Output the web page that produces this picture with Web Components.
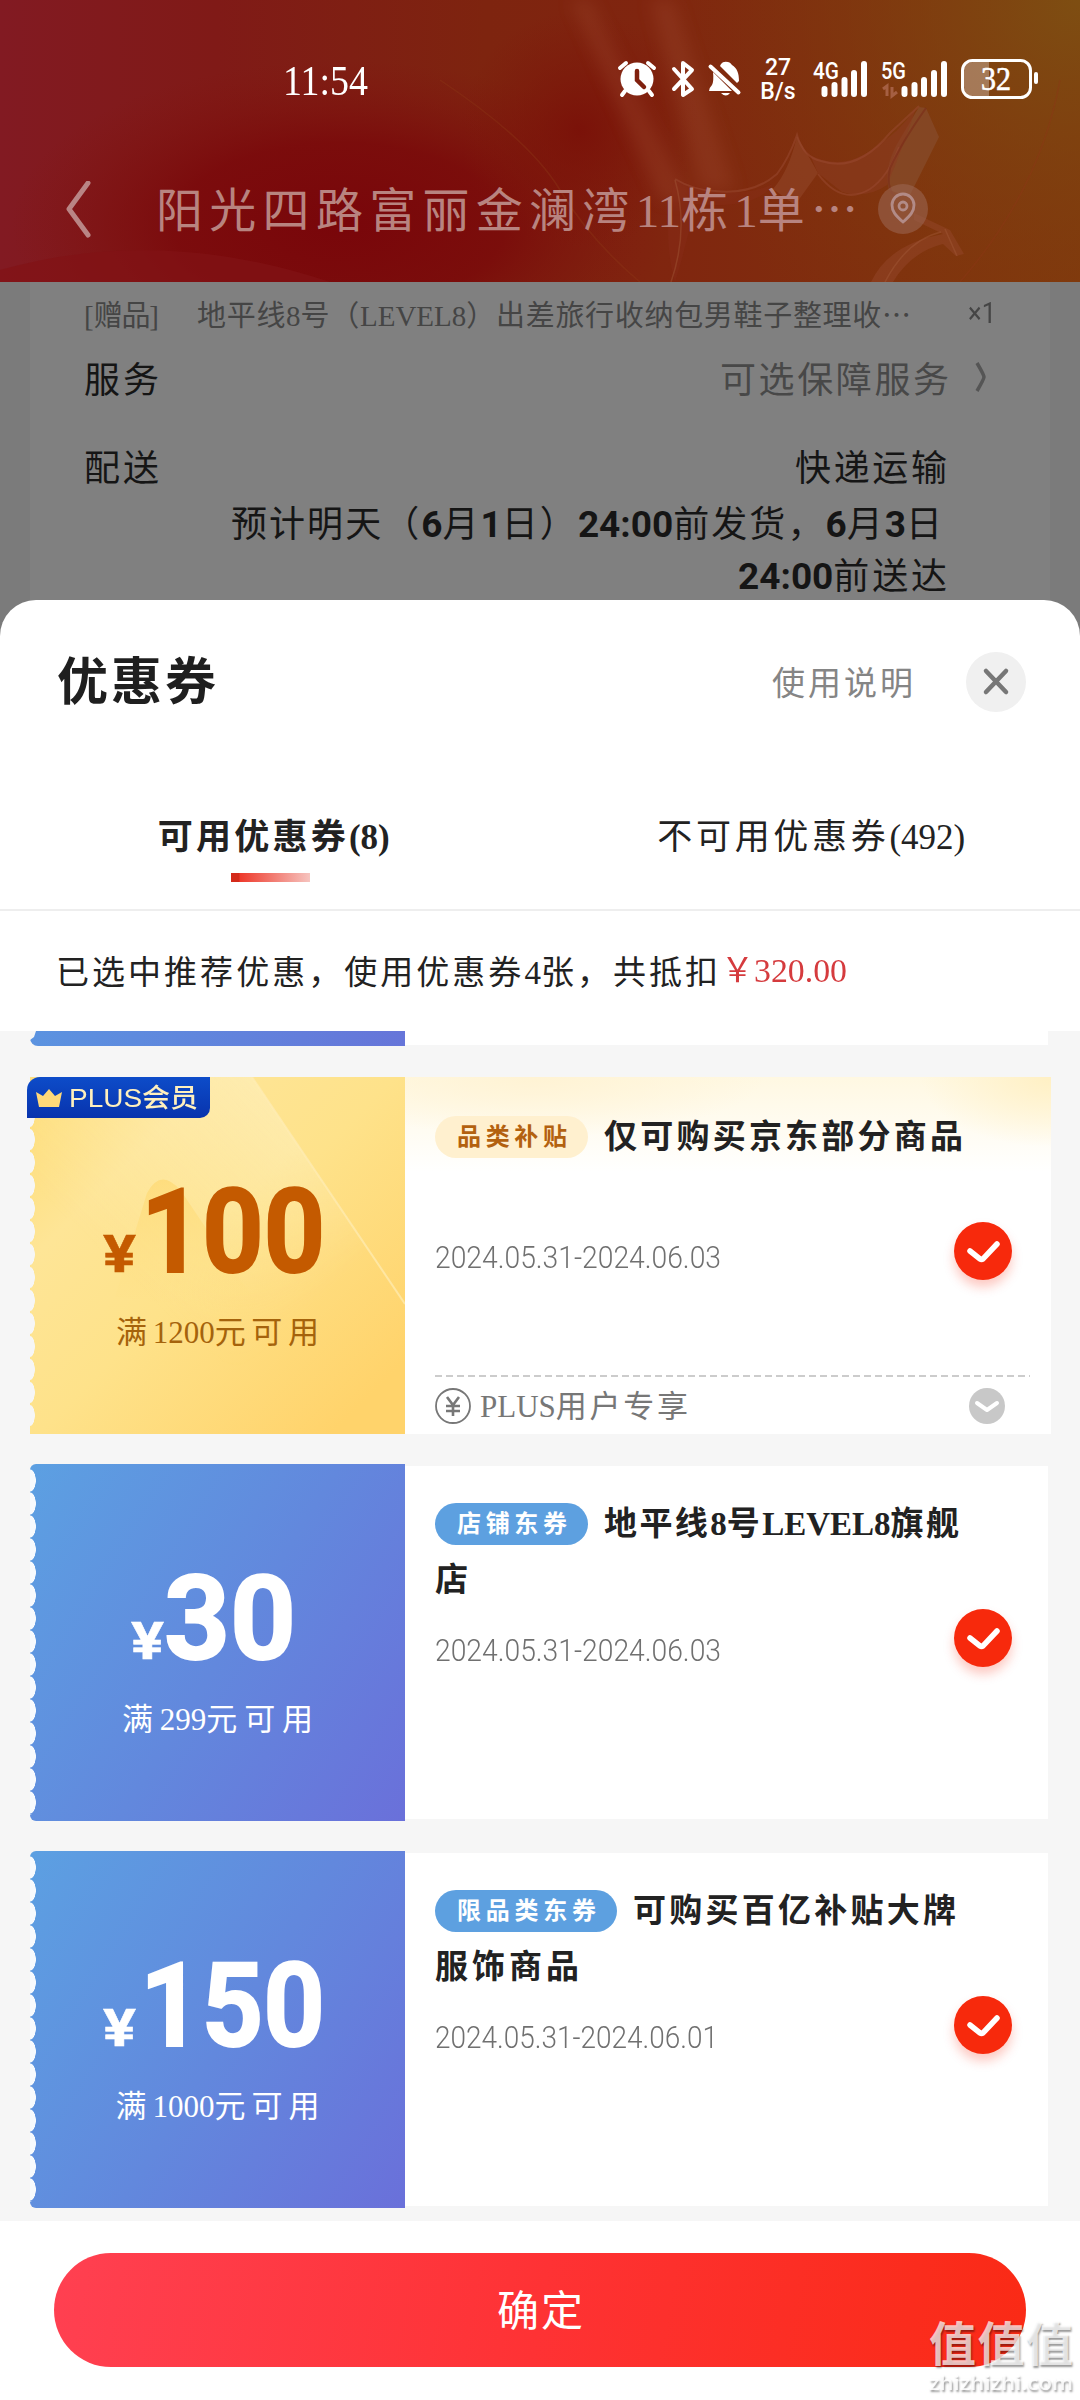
<!DOCTYPE html>
<html lang="zh-CN">
<head>
<meta charset="utf-8">
<title>优惠券</title>
<style>
body{margin:0;width:1080px;height:2400px;overflow:hidden;background:#fff;font-family:"Liberation Serif","Noto Sans CJK SC",serif;color:#222}
</style>
</head>
<body>
<coupon-page></coupon-page>
<script>
const define = (name, html, after) => customElements.define(name, class extends HTMLElement {
  connectedCallback() {
    if (this.shadowRoot) return;
    const root = this.attachShadow({mode: 'open'});
    root.innerHTML = typeof html === 'function' ? html(this) : html;
    if (after) after(this, root);
  }
});

/* Text fitted to a given width: spacing goes after the Chinese characters only,
   runs of Latin letters and digits stay tight. "scale" stretches the text instead. */
define('fit-text', `
<style>
:host{display:inline-block;white-space:nowrap;flex:none}
span{display:inline-block;transform-origin:0 50%}
</style><span><slot></slot></span>`, (el, root) => {
  const w = +el.getAttribute('w'), s = root.querySelector('span');
  const natural = s.getBoundingClientRect().width;
  el.style.width = w + 'px';
  if (el.hasAttribute('scale')) { s.style.transform = `scaleX(${w / natural})`; return; }
  const latin = /[\x21-\x7e]+/g;
  const text = el.textContent.trim();
  const wide = [...text.replace(latin, '')].length - (/[\x21-\x7e]$/.test(text) ? 0 : 1);
  for (const node of [...el.childNodes]) {
    if (node.nodeType !== 3) { if (/^[\x21-\x7e]+$/.test(node.textContent)) node.style.letterSpacing = '0'; continue; }
    const t = document.createElement('template');
    t.innerHTML = node.textContent.replace(latin, m => `<span style="letter-spacing:0">${m}</span>`);
    node.replaceWith(t.content);
  }
  if (wide > 0) s.style.letterSpacing = (w - natural) / wide + 'px';
});

define('status-bar', `
<style>
:host{display:flex;height:40px;padding:59px 42px 0 283px;color:#fff;align-items:center}
.time{font-size:43px;line-height:44px;padding-top:3px;margin-right:auto}
.icons{display:flex;align-items:center;height:40px}
svg{display:block;flex:none;fill:#fff;overflow:visible}
.rate{font:500 23px/24px Roboto,sans-serif;width:36px;margin:2px 17px 0 18px;display:flex;flex-direction:column;align-items:center}
text{font-family:Roboto,sans-serif;font-weight:500}
</style>
<fit-text class="time" w="85" scale>11:54</fit-text>
<div class="icons">
<svg width="38" height="40" viewBox="0 0 38 40"><circle cx="19" cy="20" r="16.5"/><path d="M2 9 8 4M36 9l-6-5M7 32l-3 4M31 32l3 4" stroke="#fff" stroke-width="4" stroke-linecap="round"/><path d="M19 12v9l7 7" fill="none" stroke="#80200e" stroke-width="4.500" stroke-linecap="round"/></svg>
<svg width="24" height="40" viewBox="0 0 24 40" style="margin-left:15px"><path d="M3 10l18 20-9 6V4l9 7L3 30" fill="none" stroke="#fff" stroke-width="4" stroke-linejoin="round" stroke-linecap="round"/></svg>
<svg width="34" height="40" viewBox="0 0 34 40" style="margin-left:13px"><path d="M13 5q2-3 7-2 2 0 4 3c5 3 7 8 7 16l-2 2L12 7zM5 13l19 19H1q0-3 3-6 2-4 1-13zM13 34h9q-4 5-9 0z"/><path d="M2.500 7.500l28 26" stroke="#fff" stroke-width="4" stroke-linecap="round"/></svg>
<div class="rate"><span>27</span><span>B/s</span></div>
<svg width="56" height="40" viewBox="0 0 56 40"><text x="0" y="20" font-size="23" textLength="26" lengthAdjust="spacingAndGlyphs">4G</text><path d="M11.500 30v5M21.500 26v9M31.500 21v14M41 14v21M51 5v30" stroke="#fff" stroke-width="6" stroke-linecap="round"/></svg>
<svg width="68" height="40" viewBox="0 0 68 40" style="margin-left:12px"><text x="0" y="20" font-size="23" textLength="25" lengthAdjust="spacingAndGlyphs">5G</text><path d="M2 30l4-3v10M11 28v9l5-4" fill="none" stroke="#a55f42" stroke-width="3"/><path d="M23.500 30v5M33.500 26v9M43 21v14M53 14v21M63 5v30" stroke="#fff" stroke-width="6" stroke-linecap="round"/></svg>
<svg width="78" height="40" viewBox="0 0 78 40" style="margin-left:11px"><path d="M13 3h16v34H13Q4 37 4 27V13Q4 3 13 3z" opacity=".3"/><rect x="2.500" y="1.500" width="68" height="37" rx="10" fill="none" stroke="#fff" stroke-width="3"/><rect x="74" y="13" width="4" height="12" rx="2"/><text x="21" y="31" font-size="34" textLength="30" lengthAdjust="spacingAndGlyphs" style="font-family:'Liberation Serif',serif" stroke="#fff" stroke-width=".6">32</text></svg>
</div>`);

define('order-header', `
<style>
:host{display:grid;height:282px;overflow:hidden;background:#80200e}
:host>*{grid-area:1/1}
.bg{display:block}
.title{display:flex;align-items:center;height:80px;padding:71px 0 0 65px;color:#b98585}
.title fit-text{font-size:47px;line-height:76px;margin:-3px 0 0 64px;color:#b88480}
.cjk{font-family:"Noto Sans CJK SC",sans-serif}
.pin{margin-left:20px}
</style>
<svg class="bg" width="1080" height="282" viewBox="0 0 1080 282">
<defs>
<linearGradient id="a"><stop offset="0" stop-color="#821a22"/><stop offset=".2" stop-color="#801a17"/><stop offset=".45" stop-color="#7e240f"/><stop offset=".6" stop-color="#80250f"/><stop offset="1" stop-color="#80390d"/></linearGradient>
<radialGradient id="b" gradientUnits="userSpaceOnUse" cx="0" cy="0" r="1" gradientTransform="translate(340 225) scale(330 165)"><stop offset="0" stop-color="#79060a"/><stop offset=".5" stop-color="#7a080a" stop-opacity=".8"/><stop offset="1" stop-color="#80140f" stop-opacity="0"/></radialGradient>
<radialGradient id="c" gradientUnits="userSpaceOnUse" cx="1080" cy="0" r="420"><stop offset="0" stop-color="#7e4e12"/><stop offset="1" stop-color="#80330c" stop-opacity="0"/></radialGradient>
<radialGradient id="e" gradientUnits="userSpaceOnUse" cx="580" cy="130" r="120"><stop offset="0" stop-color="#7a1008" stop-opacity=".9"/><stop offset="1" stop-color="#7c160a" stop-opacity="0"/></radialGradient>
<filter id="f" x="-50%" y="-20%" width="200%" height="140%"><feGaussianBlur stdDeviation="8"/></filter>
</defs>
<rect width="1080" height="282" fill="url(#a)"/>
<rect width="1080" height="282" fill="url(#b)"/>
<rect width="1080" height="282" fill="url(#e)"/><rect width="1080" height="282" fill="url(#c)"/>
<path d="M0 270Q160 225 330 282H0z" fill="#821216" opacity=".7"/>
<path d="M570 0h20L690 200H660zM650 0h24L735 190h-35z" fill="#a04c30" opacity=".3" filter="url(#f)"/>
<path d="M440 80Q530 140 560 190T640 282M1060 80Q1040 190 960 282" fill="none" stroke="#8c3817" stroke-width="1.500" opacity=".4"/>
<path d="M919 107l7 1 13 29-30 60-20-7q-6-20 8-46z" fill="#854826" opacity=".9"/>
<path d="M797 136l21 37-23 32-22-16q16-18 24-53z" fill="#8e4124" opacity=".7"/>
<path d="M810 155q34 18 68-10 20-12 38-37-14 42-29 77-20 14-45 7l-24-19z" fill="#8b3a20" opacity=".6"/>
<path d="M675 179l18 7q44 14 80-2-16 26-78 20-8 40-20 78-14-48 0-103z" fill="#8b2f20" opacity=".25"/>
<path d="M675 179q18 11 40 12 38 4 62-17 12-16 20-39 6 22 24 26 36 12 69-28l29-27M818 174q24 32 52 15 18-12 29-42" fill="none" stroke="#9a4a32" stroke-width="2" opacity=".5"/>
<path d="M926 108q-24 34-36 60-4 18 4 28" fill="none" stroke="#7a2b18" stroke-width="2" opacity=".6"/>
<path d="M914 213l36 17 14 24-8 2-13-12q-32 8-50 38h-22q18-38 72-48l-29-14z" fill="#94452a" opacity=".5"/>
<path d="M945 229l12 27M941 232q-34 8-56 50M675 180q14 50-4 102" fill="none" stroke="#a55c3b" stroke-width="1.500" opacity=".4"/>
</svg>
<div>
<status-bar></status-bar>
<div class="title">
<svg width="27" height="58" viewBox="0 0 27 58"><path d="M23 2 4 28l19 26" fill="none" stroke="currentColor" stroke-width="5" stroke-linecap="round" stroke-linejoin="round"/></svg>
<fit-text w="702">阳光四路富丽金澜湾11栋1单<span class="cjk">…</span></fit-text>
<svg class="pin" width="50" height="52" viewBox="0 0 50 52"><circle cx="25" cy="25" r="25" fill="#9a6450" opacity=".6"/><path d="M25 38C17 31 14 27 14 21a11 11 0 0122 0c0 6-3 10-11 17z" fill="none" stroke="#b28b87" stroke-width="2.800"/><circle cx="25" cy="22" r="4" fill="none" stroke="#b28b87" stroke-width="2.800"/></svg>
</div>
</div>`);

define('order-details', `
<style>
:host{display:block;background:#7b7b7b;padding:0 30px}
.card{background:#808080;height:358px;color:#151515;font-size:36px;overflow:hidden}
.row{display:flex;align-items:center;justify-content:space-between;padding:0 103px 0 54px}
.gift{height:61px;padding:0 54px 3px;font-size:29px;color:#454545;justify-content:flex-start}
.gift .name{margin-left:38px}.gift .qty{margin-left:auto;font-family:Roboto,sans-serif}
.serv{height:61px}.serv .v{color:#484848;margin-left:auto}
.serv{padding-right:63px}.serv svg{margin-left:26px}
.ship{height:52px;margin-top:32px}
.l1{height:60px;justify-content:flex-end;padding-right:108px}
.l2{height:44px;justify-content:flex-end;padding-right:103px}
b{font-family:Roboto,sans-serif;font-size:37px}
.cjk{font-family:"Noto Sans CJK SC",sans-serif}
.row{font-family:"Liberation Serif","Noto Sans CJK SC",serif}
</style>
<div class="card">
<div class="row gift"><fit-text w="75">[赠品]</fit-text><fit-text class="name" w="714">地平线8号（LEVEL8）出差旅行收纳包男鞋子整理收<span class="cjk">…</span></fit-text><fit-text class="qty" w="28" scale>×1</fit-text></div>
<div class="row serv"><fit-text w="75">服务</fit-text><fit-text class="v" w="229">可选保障服务</fit-text><svg width="12" height="32" viewBox="0 0 12 32"><path d="M2 2q7 12 7 14T2 30" fill="none" stroke="#555" stroke-width="3.500"/></svg></div>
<div class="row ship"><fit-text w="75">配送</fit-text><fit-text w="152">快递运输</fit-text></div>
<div class="row l1"><fit-text w="711">预计明天（<b>6</b>月<b>1</b>日）<b>24:00</b>前发货，<b>6</b>月<b>3</b>日</fit-text></div>
<div class="row l2"><fit-text w="209"><b>24:00</b>前送达</fit-text></div>
</div>`);

define('sheet-header', `
<style>
:host{display:flex;height:164px;align-items:center;padding:0 54px 0 57px}
h1{margin:2px auto 0 0;font-size:51px;line-height:70px;font-weight:700;color:#1f1f1f}
.help{font-size:33px;color:#858585;margin:-3px 53px 0 0}
</style>
<h1><fit-text w="159">优惠券</fit-text></h1>
<fit-text class="help" w="141">使用说明</fit-text>
<svg width="60" height="60" viewBox="0 0 60 60"><circle cx="30" cy="30" r="30" fill="#f0f0f0"/><path d="M20 19l20 21M40 19L20 40" stroke="#777" stroke-width="4.500" stroke-linecap="round"/></svg>`);

define('sheet-tab', `
<style>
:host{display:flex;flex:1;flex-direction:column;align-items:center;height:145px;font-size:35px;color:#222}
.t{margin-top:49px;height:50px;line-height:50px}
:host([active]) .t{font-weight:700}
i{display:none;width:79px;height:9px;margin:10px 7px 0 0;background:linear-gradient(90deg,#d42a1a 0 8px,#ee3a2c 9px,#f6c4bf)}
:host([active]) i{display:block}
</style><div class="t"><slot></slot></div><i></i>`);

define('check-mark', `
<style>:host{display:block;border-radius:50%;width:58px;height:58px;background:#f7290c;box-shadow:0 7px 11px #f7290c40}svg{display:block}</style>
<svg width="58" height="58" viewBox="0 0 58 58"><path d="M16 29l10 8q1.500 1 3 0l14-15" fill="none" stroke="#fff" stroke-width="5.500" stroke-linecap="round"/></svg>`);

define('coupon-card', el => {
  const a = n => el.getAttribute(n), gold = el.hasAttribute('gold');
  return `
<style>
:host{display:flex;position:relative;height:357px;margin-bottom:30px}
.left{width:375px;flex:none;display:flex;flex-direction:column;align-items:center;position:relative;
 background:linear-gradient(122deg,#5ca0e2,#6288dd 52%,#6a70da);color:#fff;border-radius:6px 0 0 6px;overflow:hidden;box-sizing:border-box}
.teeth{position:absolute;left:0;top:5px;width:6px;height:346px;background:radial-gradient(ellipse 6px 11.5px at 0 50%,#f7fafd 92%,#f7fafd00 100%) 0 0/6px 23px}
:host([gold]) .left{background:linear-gradient(135deg,#fedc74,#fee596 25%,#fee28a 50%,#ffd36b 90%);color:#c45a00;border-radius:0}
:host([gold]) .teeth{background-image:radial-gradient(ellipse 5px 11px at 0 50%,#f6f6f6 90%,#f6f6f600)}
.shine{position:absolute;left:0;top:0}
.amt{display:flex;align-items:baseline;font-family:Roboto,sans-serif;font-weight:700;font-size:117px;line-height:120px;height:120px;margin:95px 8px 0 0;position:relative;-webkit-text-stroke:2px currentColor}
.yen{font-size:52px;margin-right:${a('yg')}px;-webkit-text-stroke:.5px currentColor}
.cond{font-size:31px;line-height:40px;margin:21px 0 0 0;position:relative;color:#fff}
:host([gold]) .cond{color:#a5630c}
.right{width:${gold ? 646 : 643}px;background:#fff;margin:${gold ? 0 : '2px 0'};box-sizing:border-box;padding:${gold ? 39 : 37}px 0 0 30px}
:host([gold]) .right{background:radial-gradient(ellipse 130px 70px at 100% 0,#fff0c4,#fff3d000),radial-gradient(ellipse 230px 60px at 130px 0,#fff3d4,#fff3d000),linear-gradient(#fff8e2,#fff 95px)}
.line{display:flex;align-items:center;height:41px}
.tag{height:42px;border-radius:21px;display:flex;align-items:center;justify-content:center;background:#5da0e0;color:#fff;font:700 24px/38px "Noto Sans CJK SC",sans-serif;margin-right:16px}
.tag fit-text{margin:-4px 0 0 1px}
:host([gold]) .tag{background:#fff0cf;color:#b3610f}
.name{font-size:33px;font-weight:700;color:#222;margin-top:-6px}
.second{margin-top:15px;height:41px}
.date{font:300 31px/36px Roboto,sans-serif;color:#707070;margin-top:${gold ? 83 : 33}px;display:block}
check-mark{position:absolute;left:924px;top:145px}
.foot{display:flex;align-items:center;margin-top:99px;width:595px;padding-top:12px;color:#777;font-size:31px;background:repeating-linear-gradient(90deg,#ccc 0 7px,#fff0 7px 11px) 0 0/100% 2px no-repeat;height:38px}
.foot fit-text{margin:2px auto 0 9px;line-height:36px}
.foot .more{margin-right:25px}
.plus{position:absolute;left:-3px;top:0;width:183px;height:41px;border-radius:13px 0 10px 0;background:linear-gradient(#0d4cc9,#0833ad);display:flex;align-items:center;color:#fff0bd;font:500 26px/40px "Liberation Sans","Noto Sans CJK SC",sans-serif}
.plus svg{margin:0 7px 0 9px}
</style>
<div class="left">
${gold ? `<svg class="shine" width="375" height="357" viewBox="0 0 375 357"><defs><linearGradient id="g" x1="0" y1="1" x2="1" y2="0"><stop offset=".35" stop-color="#fff3c4" stop-opacity="0"/><stop offset="1" stop-color="#fff3cf" stop-opacity=".7"/></linearGradient><linearGradient id="k" x1="0" y1="0" x2="1" y2="1"><stop offset=".45" stop-color="#fff" stop-opacity="1"/><stop offset=".7" stop-color="#fff" stop-opacity="0"/></linearGradient><mask id="m"><rect width="375" height="357" fill="url(#k)"/></mask><linearGradient id="h" x1="0" y1="0" x2="0" y2="1"><stop offset="0" stop-color="#ffd86e"/><stop offset="1" stop-color="#ffdf80" stop-opacity="0"/></linearGradient></defs><path d="M0 0h222l153 227v130H0z" fill="url(#g)" mask="url(#m)"/><path d="M222 0l153 227" stroke="#ffedb5" stroke-width="2" opacity=".7"/><path d="M85 220l32-104q14-26 34-2l82 122z" fill="url(#h)" opacity=".65"/></svg>` : ''}
<div class="teeth"></div>
<div class="amt"><fit-text class="yen" w="33" scale>¥</fit-text><fit-text w="${a('aw')}" scale>${a('amount')}</fit-text></div>
<fit-text class="cond" w="${a('cw')}">${a('cond')}</fit-text>
</div>
<div class="right">
<div class="line"><div class="tag" style="width:${a('tagw')}px"><fit-text w="${a('tw')}">${a('tag')}</fit-text></div><fit-text class="name" w="${a('nw')}">${a('name')}</fit-text></div>
${a('second') ? `<div class="line second"><fit-text class="name" w="${a('sw')}">${a('second')}</fit-text></div>` : ''}
<fit-text class="date" scale w="${a('dw')}">${a('date')}</fit-text>
${gold ? `<div class="foot"><svg width="36" height="36" viewBox="0 0 36 36" fill="none" stroke="#777"><circle cx="18" cy="18" r="17" stroke-width="1.800"/><path d="M12 9l6 8 6-8M11 18h14M11 23h14M18 17v11" stroke-width="2.600"/></svg><fit-text w="208">PLUS用户专享</fit-text><svg class="more" width="36" height="36" viewBox="0 0 36 36"><circle cx="18" cy="18" r="18" fill="#c8c8c8"/><path d="M8 15l10 7 10-7" fill="none" stroke="#fff" stroke-width="4" stroke-linecap="round" stroke-linejoin="round"/></svg></div>` : ''}
</div>
${gold ? `<div class="plus"><svg width="26" height="18" viewBox="0 0 26 18"><path d="M0 3l7 4 6-7 6 7 7-4-3 15H3z" fill="#ffd979"/></svg><fit-text w="129" scale>PLUS会员</fit-text></div>` : ''}
<check-mark></check-mark>`;
});

define('coupon-sheet', `
<style>
:host{display:block;position:relative;margin-top:-40px;background:#fff;border-radius:36px 36px 0 0;height:1800px;overflow:hidden}
.tabs{display:flex;border-bottom:2px solid #eee;padding-left:5px}
.note{height:118px;display:flex;align-items:center;padding:0 0 2px 56px;font-size:33px;color:#222}
.note .sum{color:#d53b3e;margin-left:3px;display:flex;align-items:center;font-size:34px;height:42px;padding-top:2px;line-height:42px}
.list{background:#f6f6f6;height:1190px;overflow:hidden;padding-left:30px;box-sizing:border-box}
.prev{display:flex;height:15px;width:1018px;margin-bottom:31px;background:linear-gradient(#fff,#fff) 100% 0/643px 14px no-repeat}
.prev i{width:375px;background:linear-gradient(90deg,#5b93e0,#6675d9);border-radius:0 0 0 8px;clip-path:polygon(6px 0,100% 0,100% 100%,0 100%,0 9px,4px 6px)}
.foot{padding:32px 54px 0}
button{display:flex;width:972px;height:114px;border:0;border-radius:57px;background:linear-gradient(100deg,#ff4051,#fe3234 50%,#fa2a15);color:#fff;align-items:center;justify-content:center;font:42px/60px "Liberation Serif","Noto Sans CJK SC",serif;padding:3px 0 0}
.mark{position:absolute;left:929px;top:1711px;color:#ffffffb8;text-shadow:1px 2px 2px #0006;font-family:"Noto Sans CJK SC",sans-serif;display:flex;flex-direction:column}
.mark fit-text{display:block}
.mark .a{font-size:47px;line-height:60px;font-weight:700}
.mark .b{font:600 20px/24px "Open Sans",sans-serif;color:#ffffffe0}
</style>
<sheet-header></sheet-header>
<div class="tabs"><sheet-tab active><fit-text w="232">可用优惠券(8)</fit-text></sheet-tab><sheet-tab><fit-text w="308">不可用优惠券(492)</fit-text></sheet-tab></div>
<div class="note"><fit-text w="662">已选中推荐优惠，使用优惠券4张，共抵扣</fit-text><div class="sum"><fit-text w="33" scale>￥</fit-text><fit-text w="93" scale>320.00</fit-text></div></div>
<div class="list">
<div class="prev"><i></i></div>
<coupon-card gold amount="100" aw="184" yg="5" cond="满1200元可用" cw="203" tag="品类补贴" tagw="153" tw="110" name="仅可购买京东部分商品" nw="359" date="2024.05.31-2024.06.03" dw="286"></coupon-card>
<coupon-card amount="30" aw="132" yg="0" cond="满299元可用" cw="191" tag="店铺东券" tagw="153" tw="110" name="地平线8号LEVEL8旗舰" nw="355" second="店" sw="33" date="2024.05.31-2024.06.03" dw="286"></coupon-card>
<coupon-card amount="150" aw="185" yg="4" cond="满1000元可用" cw="204" tag="限品类东券" tagw="182" tw="139" name="可购买百亿补贴大牌" nw="323" second="服饰商品" sw="144" date="2024.05.31-2024.06.01" dw="283"></coupon-card>
</div>
<div class="foot"><button><fit-text w="86">确定</fit-text></button></div>
<div class="mark"><fit-text class="a" w="144">值值值</fit-text><fit-text class="b" w="144" scale>zhizhizhi.com</fit-text></div>`);

define('coupon-page', `
<style>:host{display:block;width:1080px;height:2400px;overflow:hidden}</style>
<order-header></order-header><order-details></order-details><coupon-sheet></coupon-sheet>`);
</script>
</body>
</html>
